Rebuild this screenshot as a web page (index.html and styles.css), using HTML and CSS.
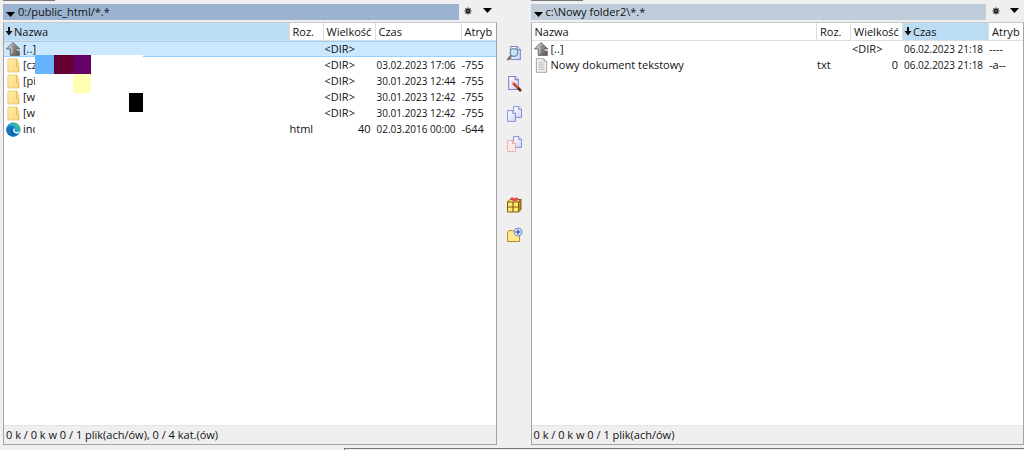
FILE: index.html
```html
<!DOCTYPE html>
<html lang="pl">
<head>
<meta charset="utf-8">
<title>Menedżer plików</title>
<link rel="stylesheet" href="styles.css">
</head>
<body>
<svg class="defs" aria-hidden="true">
  <defs>
    <linearGradient id="gray" x1="0" y1="0" x2="1" y2="1"><stop offset="0" stop-color="#bbb"/><stop offset="1" stop-color="#555"/></linearGradient>
    <linearGradient id="gold" x1="0" y1="0" x2="1" y2="1"><stop offset="0" stop-color="#ffedaa"/><stop offset="1" stop-color="#fada7e"/></linearGradient>
    <linearGradient id="edgeg" x1="0" y1="1" x2="1" y2="0"><stop offset="0" stop-color="#0c59a4"/><stop offset=".5" stop-color="#1b9de0"/><stop offset="1" stop-color="#66d45c"/></linearGradient>
    <linearGradient id="paper" x1="0" y1="0" x2="1" y2="1"><stop offset="0" stop-color="#fff"/><stop offset="1" stop-color="#ccd5fa"/></linearGradient>
    <symbol id="up" viewBox="0 0 14 14"><path d="M6.500 .5 13 6.500H9.500V8.500H12.500V12.500H4V6.500H.5Z" fill="url(#gray)" stroke="#666" stroke-width=".8"/><path d="M6.500 2 3 5.500H5.500V11" fill="none" stroke="#ddd" stroke-width=".8"/></symbol>
    <symbol id="folder" viewBox="0 0 14 16"><path d="M1 1H11V4L12.500 5V15H1Z" fill="url(#gold)" stroke="#e8c66c" stroke-width=".8"/><path d="M10.500 2V9L12.500 10V15" fill="none" stroke="#d8aa3e" stroke-width=".8"/></symbol>
    <symbol id="edge" viewBox="0 0 16 16"><circle cx="8" cy="8" r="7.700" fill="url(#edgeg)"/><path d="M.4 8C1 4.500 6 3 9 5.500c1.500 1.300 1 2.500.4 3.200-.6 1 1 2 5.500 1.100C13 14.500 9 16 6 15.500 2 14.500 .2 11 .4 8Z" fill="#1475bf"/><path d="M7.500 6.500C5 8 6 13 10.500 13.500c-4 .8-7.500-4-3-7Z" fill="#0b3f82"/><path d="M9 6.500c1 1 .4 2-.1 2.600-.3 1 2 2.200 6.100.8L13.500 12C9 13.500 5.500 9.500 9 6.500Z" fill="#f2fbff"/></symbol>
    <symbol id="doc" viewBox="0 0 14 16"><path d="M1.500 .8H9.500L12.500 4V15.200H1.500Z" fill="#f8f8f8" stroke="#999"/><path d="M9.500 1V4H12.500M3.500 4.500H8M3.500 6.500H10.500M3.500 8.500H10.500M3.500 10.500H10.500M3.500 12.500H10.500" fill="none" stroke="#aaa" stroke-width=".9"/></symbol>
    <symbol id="arrow" viewBox="0 0 8 9"><path d="M3 0H5V4H7.500L4 8.500 .5 4H3Z" fill="#111"/></symbol>
    <symbol id="tri" viewBox="0 0 9 5"><path d="M0 0H9L4.500 5Z" fill="#000"/></symbol>
    <symbol id="star" viewBox="0 0 8 8"><path d="M4 .5V7.500M.5 4H7.500M1.500 1.500 6.500 6.500M6.500 1.500 1.500 6.500" stroke="#111" stroke-width="1.100"/><circle cx="4" cy="4" r=".8" fill="#aaa"/></symbol>
    <symbol id="sheet" viewBox="0 0 10 13"><path d="M.5 .5H6.500L9.500 3.500V12.500H.5Z" fill="url(#paper)" stroke="#7c86cc"/><path d="M6.500 .5V3.500H9.500" fill="#fff" stroke="#5f6abf" stroke-width=".9"/></symbol>
  </defs>
</svg>
<main class="app">
  <section class="pane pane-left" aria-label="Lewy panel">
    <header class="bar">
      <button class="path active"><svg class="tri"><use href="#tri"/></svg>0:/public_html/*.*</button>
      <button class="tool" aria-label="Ulubione"><svg class="star"><use href="#star"/></svg></button>
      <button class="tool" aria-label="Historia"><svg class="tri"><use href="#tri"/></svg></button>
    </header>
    <div class="list">
      <table>
        <colgroup><col><col class="c-ext"><col class="c-size"><col class="c-time"><col class="c-attr"></colgroup>
        <thead><tr><th class="sorted"><svg class="arrow"><use href="#arrow"/></svg>Nazwa</th><th>Roz.</th><th>Wielkość</th><th>Czas</th><th>Atryb</th></tr></thead>
        <tbody>
          <tr class="selected"><td><span class="name"><svg class="ico"><use href="#up"/></svg>[..]</span></td><td></td><td class="dir">&lt;DIR&gt;</td><td></td><td></td></tr>
          <tr><td><span class="name"><svg class="ico"><use href="#folder"/></svg>[cz</span></td><td></td><td class="dir">&lt;DIR&gt;</td><td class="time">03.02.2023 17:06</td><td class="attr">-755</td></tr>
          <tr><td><span class="name"><svg class="ico"><use href="#folder"/></svg>[pi</span></td><td></td><td class="dir">&lt;DIR&gt;</td><td class="time">30.01.2023 12:44</td><td class="attr">-755</td></tr>
          <tr><td><span class="name"><svg class="ico"><use href="#folder"/></svg>[w</span></td><td></td><td class="dir">&lt;DIR&gt;</td><td class="time">30.01.2023 12:42</td><td class="attr">-755</td></tr>
          <tr><td><span class="name"><svg class="ico"><use href="#folder"/></svg>[w</span></td><td></td><td class="dir">&lt;DIR&gt;</td><td class="time">30.01.2023 12:42</td><td class="attr">-755</td></tr>
          <tr><td><span class="name"><svg class="ico"><use href="#edge"/></svg>inc</span></td><td class="ext">html</td><td class="size">40</td><td class="time">02.03.2016 00:00</td><td class="attr">-644</td></tr>
        </tbody>
      </table>
      <div class="mask" aria-hidden="true"><i class="blue"></i><i class="wine"></i><i class="purple"></i><i class="yellow"></i><i class="black"></i></div>
      <footer class="status">0 k / 0 k w 0 / 1 plik(ach/ów), 0 / 4 kat.(ów)</footer>
    </div>
  </section>
  <nav class="tools" aria-label="Narzędzia">
    <button class="action" aria-label="Podgląd"><svg viewBox="0 0 18 18"><use href="#sheet" x="5" y="1" width="11" height="14"/><circle cx="9" cy="7.500" r="3.800" fill="#c7e5f5" stroke="#6d8da7" stroke-width="1.300"/><path d="M6 11 2.500 15" stroke="#8b7258" stroke-width="2.600"/></svg></button>
    <button class="action" aria-label="Edytuj"><svg viewBox="0 0 18 18"><use href="#sheet" x="3" y="1" width="11" height="14"/><path d="m8 8 6 6" stroke="#c9483a" stroke-width="2.600"/><path d="m13 13 3 3" stroke="#6d211d" stroke-width="2.500"/><path d="m6.500 7 2 .5" stroke="#f2bd76" stroke-width="2"/></svg></button>
    <button class="action" aria-label="Kopiuj"><svg viewBox="0 0 18 18"><use href="#sheet" x="8" y="1" width="9" height="12"/><use href="#sheet" x="2" y="5" width="9" height="12"/></svg></button>
    <button class="action" aria-label="Przenieś"><svg viewBox="0 0 18 18"><use href="#sheet" x="8" y="1" width="9" height="12"/><path d="M2.500 5.500H7.500L10.500 8.500V16.500H2.500Z" fill="#fbe8e8" stroke="#eba0a0" stroke-dasharray="2 .7"/><path d="M7.500 5.500V8.500H10.500" fill="none" stroke="#eba0a0"/></svg></button>
    <button class="action pack" aria-label="Spakuj"><svg viewBox="0 0 18 18"><path d="M2.500 6 5 3.500H16L13.500 6V16H2.500Z" fill="#ffe477" stroke="#80600d"/><path d="m13.500 6 2.500-2.500V13.500L13.500 16Z" fill="#b88b1c" stroke="#80600d"/><path d="M2.500 6H13.500M8 6V16M2.500 11H13.500" stroke="#80600d" stroke-width="1.200"/><path d="M5 3.500C5 1 8.500 1 9.500 2.500 11 .5 14 1.500 13.500 4L10 5.500Z" fill="#e34a4a"/></svg></button>
    <button class="action" aria-label="Nowy folder"><svg viewBox="0 0 18 18"><path d="M2.500 6.500 4 4.500H8L9.500 6.500H14.500V15.500H2.500Z" fill="#ffe98c" stroke="#b58b2c"/><circle cx="13" cy="6" r="4" fill="#dce8ff" stroke="#7891cc"/><path d="M13 3.500V8.500M10.500 6H15.500" stroke="#476ab4" stroke-width="1.600"/></svg></button>
  </nav>
  <section class="pane" aria-label="Prawy panel">
    <header class="bar">
      <button class="path"><svg class="tri"><use href="#tri"/></svg>c:\Nowy folder2\*.*</button>
      <button class="tool" aria-label="Ulubione"><svg class="star"><use href="#star"/></svg></button>
      <button class="tool" aria-label="Historia"><svg class="tri"><use href="#tri"/></svg></button>
    </header>
    <div class="list">
      <table>
        <colgroup><col><col class="c-ext"><col class="c-size"><col class="c-time"><col class="c-attr"></colgroup>
        <thead><tr><th>Nazwa</th><th>Roz.</th><th>Wielkość</th><th class="sorted"><svg class="arrow"><use href="#arrow"/></svg>Czas</th><th>Atryb</th></tr></thead>
        <tbody>
          <tr><td><span class="name"><svg class="ico"><use href="#up"/></svg>[..]</span></td><td></td><td class="dir">&lt;DIR&gt;</td><td class="time">06.02.2023 21:18</td><td class="attr">----</td></tr>
          <tr><td><span class="name"><svg class="ico"><use href="#doc"/></svg>Nowy dokument tekstowy</span></td><td class="ext">txt</td><td class="size">0</td><td class="time">06.02.2023 21:18</td><td class="attr">-a--</td></tr>
        </tbody>
      </table>
      <footer class="status">0 k / 0 k w 0 / 1 plik(ach/ów)</footer>
    </div>
  </section>
</main>
<div class="bottom"></div>
</body>
</html>
```
FILE: styles.css
```css
* { box-sizing: border-box; }
body {
  margin: 0;
  height: 100vh;
  display: flex;
  flex-direction: column;
  overflow: hidden;
  background: #efefef;
  color: #111;
  font: 11px/16px "Open Sans", "Noto Sans", sans-serif;
}
button { margin: 0; padding: 0; border: 0; background: none; font: inherit; color: inherit; }
svg { display: block; flex: none; }
.defs { position: absolute; width: 0; height: 0; }
.app {
  flex: 1;
  min-height: 0;
  display: grid;
  grid-template-columns: 1fr 34px 1fr;
  padding-left: 3px;
}
.pane { display: flex; flex-direction: column; min-width: 0; }
.pane::before { content: ""; width: 52px; height: 1px; margin-bottom: 3px; background: #777; }
.bar { display: flex; height: 16px; margin-bottom: 2px; }
.path {
  flex: 1;
  display: flex;
  align-items: center;
  gap: 3px;
  padding-left: 3px;
  background: #bfcddb;
  text-align: left;
}
.path.active { background: #9bb3d1; }
.path .tri { margin-top: 5px; }
.tri { width: 9px; height: 5px; }
.tool { width: 19px; display: flex; align-items: center; justify-content: center; }
.tool .tri { margin-bottom: 3px; }
.star { width: 8px; height: 8px; margin-bottom: 2px; }
.list {
  position: relative;
  flex: 1;
  display: flex;
  flex-direction: column;
  min-height: 0;
  background: #fff;
  border: 1px solid #a5a5a5;
  border-top-color: #c8c8c8;
}
table { width: 100%; table-layout: fixed; border-collapse: separate; border-spacing: 0; }
.c-ext { width: 34px; }
.c-size { width: 52px; }
.c-time { width: 86px; }
.c-attr { width: 34px; }
th, td { height: 16px; padding: 0; white-space: nowrap; text-align: left; font-weight: 400; }
th { height: 18px; padding-left: 3px; border-right: 1px solid #ddd; border-bottom: 1px solid #ddd; }
th:last-child { border-right: 0; }
th .arrow { display: inline-block; width: 8px; height: 9px; margin-right: 1px; }
.sorted { padding-left: 1px; background: #bcdcf4; }
.selected td { background: #cce8ff; border-top: 1px solid #99d1ff; border-bottom: 1px solid #99d1ff; line-height: 14px; }
.name { display: flex; align-items: center; gap: 2px; height: 14px; padding-left: 2px; }
.ico { width: 15px; height: 15px; }
.dir { padding-left: 1px; }
.time { padding-left: 1px; font-family: "Liberation Sans Narrow", "Open Sans", sans-serif; font-size: 10px; }
.size { text-align: right; padding-right: 5px; }
.status { margin-top: auto; height: 19px; padding-left: 2px; background: #efefef; border-top: 1px solid #e3e3e3; line-height: 17px; }
.mask {
  position: absolute;
  left: 31px;
  top: 32px;
  display: grid;
  grid-template-columns: 19px 19px 18px 38px 14px;
  grid-template-rows: 19px 19px 19px 25px;
  background: #fff;
}
.blue { background: #66b3ff; }
.wine { background: #660033; }
.purple { background: #660066; }
.yellow { grid-area: 2 / 3; background: #ffffb3; }
.black { grid-area: 3 / 5; background: #000; }
.tools { display: flex; flex-direction: column; align-items: center; gap: 12px; padding-top: 45px; }
.action { width: 18px; height: 18px; }
.action svg { width: 18px; height: 18px; }
.pack { margin-top: 31px; }
.bottom { height: 2px; flex: none; margin: 3px 0 0 344px; border-left: 1px solid #777; border-top: 1px solid #777; }
```
